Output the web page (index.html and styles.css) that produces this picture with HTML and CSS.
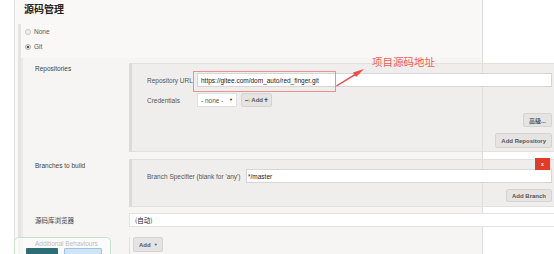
FILE: index.html
```html
<!DOCTYPE html>
<html lang="zh">
<head>
<meta charset="utf-8">
<title>源码管理</title>
<link rel="stylesheet" href="styles.css">
</head>
<body>
<div class="panel">
  <h2 class="title">源码管理</h2>
  <div class="scm">
    <div class="radio"><span class="dot"></span>None</div>
    <div class="radio"><span class="dot on"></span>Git</div>
    <div class="git">
      <div class="row">
        <div class="lbl">Repositories</div>
        <div class="box repo-box">
          <div class="fields repo-fields">
            <div class="flbl">Repository URL</div>
            <div class="input">https://gitee.com/dom_auto/red_finger.git</div>
            <div class="flbl">Credentials</div>
            <div class="cred">
              <div class="select">- none -<span class="caret">&#9660;</span></div>
              <button class="btn addkey"><svg width="9" height="5" viewBox="0 0 9 5"><rect x="0" y="1.6" width="5.5" height="1.8" fill="#3a78c2"/><circle cx="6.8" cy="2.5" r="2" fill="#f2c230"/></svg>Add<span class="plus">&#10010;</span></button>
            </div>
          </div>
          <div class="actions">
            <button class="btn">高级...</button>
            <button class="btn tall">Add Repository</button>
          </div>
        </div>
      </div>
      <div class="row branches">
        <div class="lbl">Branches to build</div>
        <div class="box branch-box">
          <button class="del">x</button>
          <div class="fields branch-fields">
            <div class="flbl">Branch Specifier (blank for 'any')</div>
            <div class="input spec">*/master</div>
          </div>
          <div class="actions">
            <button class="btn">Add Branch</button>
          </div>
        </div>
      </div>
      <div class="row browser">
        <div class="lbl cn">源码库浏览器</div>
        <div class="input wide">(自动)</div>
      </div>
      <div class="row behaviours">
        <div class="lbl">Additional Behaviours</div>
        <div class="addcell"><button class="btn addbtn">Add <span class="dd">&#9660;</span></button></div>
      </div>
    </div>
  </div>
</div>

<div class="mark"></div>
<svg class="arrow" width="40" height="24" viewBox="0 0 40 24">
  <polygon points="1,20.5 19,9.2 18,7.6 29,4 21,12 20,10.6 1.8,21.6" fill="#f04a4a"/>
</svg>
<div class="note">项目源码地址</div>

<div class="popup">
  <span class="pb teal"></span>
  <span class="pb light"></span>
</div>
</body>
</html>
```
FILE: styles.css
```css
html, body {
  margin: 0;
  padding: 0;
  width: 554px;
  height: 254px;
  overflow: hidden;
  background: #fff;
}
body {
  position: relative;
  font-family: "Liberation Sans", Arial, "Noto Sans CJK SC", sans-serif;
  font-size: 6.5px;
  color: #444;
}
.panel {
  position: relative;
  margin-left: 14px;
  width: 467px;
  height: 254px;
  overflow: visible;
  background: #f9f8f7;
  border-left: 1px solid #e4e3e1;
}
.panel::after {
  content: "";
  position: absolute;
  left: 467px;
  top: 0;
  bottom: 0;
  width: 1px;
  background: #dedddb;
  z-index: 1;
}
.title {
  margin: 0 0 9px;
  padding: 3px 0 0 9px;
  font: bold 10px/12px "Noto Sans CJK SC", sans-serif;
  color: #222;
}
.scm {
  margin-left: 3px;
  border-left: 3px solid #e5e4e2;
}
.radio {
  display: flex;
  align-items: center;
  gap: 3px;
  height: 15px;
  padding-left: 4px;
  color: #555;
}
.dot {
  width: 6px;
  height: 6px;
  box-sizing: border-box;
  border-radius: 50%;
  border: 1px solid #c4c4c4;
  background: #efefef;
}
.dot.on {
  background: radial-gradient(circle, #555 0 1.3px, #eee 1.6px);
  border-color: #aaa;
}
.git {
  margin-top: 4px;
  padding-top: 5px;
  border-left: 2px solid #ebeae8;
  background: #f6f5f3;
}
.row {
  display: grid;
  grid-template-columns: 106px 427px;
}
.lbl {
  padding: 2px 0 0 12px;
  line-height: 8px;
  color: #444;
}
.lbl.cn {
  font-family: "Noto Sans CJK SC", sans-serif;
  font-size: 6.5px;
}
.box {
  position: relative;
  box-sizing: border-box;
  background: #efeeec;
  border-top: 1px solid #e2e1df;
  border-bottom: 1px solid #e2e1df;
  border-left: 3px solid #dbdad8;
  padding: 9px 4px 3px 15px;
}
.fields {
  display: grid;
  row-gap: 6px;
  align-items: center;
}
.repo-fields { grid-template-columns: 50px 1fr; }
.branch-fields { grid-template-columns: 99px 1fr; }
.flbl {
  color: #555;
  white-space: nowrap;
}
.input {
  position: relative;
  z-index: 2;
  box-sizing: border-box;
  height: 14px;
  display: flex;
  align-items: center;
  padding-left: 3px;
  background: #fff;
  border: 1px solid #d6d6d6;
  color: #222;
}
.input.spec { padding-left: 1px; }
.cred {
  display: flex;
  gap: 4px;
  height: 14px;
}
.select {
  box-sizing: border-box;
  width: 40px;
  height: 14px;
  display: flex;
  align-items: center;
  padding-left: 3px;
  background: #fff;
  border: 1px solid #e0e0e0;
  color: #555;
  position: relative;
}
.caret {
  position: absolute;
  right: 3px;
  top: 3px;
  font-size: 4px;
  color: #222;
}
.btn {
  position: relative;
  z-index: 2;
  box-sizing: border-box;
  height: 14px;
  padding: 0 5px;
  font: bold 6px "Liberation Sans", Arial, "Noto Sans CJK SC", sans-serif;
  color: #555;
  background: #e5e4e2;
  border: 1px solid #d5d4d2;
  border-radius: 2px;
  display: inline-flex;
  align-items: center;
  gap: 1px;
}
.btn.tall { height: 15px; }
.addkey {
  width: 31px;
  padding: 0 3px;
  gap: 1px;
}
.plus {
  font-size: 4px;
  color: #444;
}
.actions {
  display: flex;
  flex-direction: column;
  align-items: flex-end;
  gap: 6px;
  margin-top: 6px;
}
.branches { margin-top: 7px; }
.branches .lbl { padding-top: 3px; }
.branch-box { padding-bottom: 4px; }
.branch-box .btn { height: 13px; }
.del {
  position: absolute;
  z-index: 3;
  top: -2px;
  right: 6px;
  width: 15px;
  height: 12px;
  padding: 0;
  border: 0;
  background: #e33b25;
  color: #fff;
  font: bold 5px/11px "Liberation Sans", Arial, sans-serif;
}
.browser {
  margin-top: 6px;
  align-items: center;
}
.browser .lbl { padding-top: 0; }
.input.wide {
  padding-left: 5px;
  border-color: #e2e2e2;
  font-family: "Noto Sans CJK SC", sans-serif;
}
.behaviours {
  margin-top: 10px;
  height: 17px;
}
.behaviours .lbl { padding-top: 3px; }
.addcell {
  border-left: 1px solid #e2e1df;
  padding-left: 3px;
}
.addbtn {
  height: 15px;
  width: 30px;
  gap: 3px;
}
.dd { font-size: 4px; }

/* annotation overlay */
.mark {
  position: absolute;
  left: 193px;
  top: 71px;
  width: 141px;
  height: 19px;
  border: 1px solid #ee9090;
  z-index: 5;
}
.arrow {
  position: absolute;
  left: 335px;
  top: 65px;
  z-index: 5;
}
.note {
  position: absolute;
  left: 372px;
  top: 55px;
  font: 10.5px/14px "Noto Sans CJK SC", sans-serif;
  color: #f25a5a;
  z-index: 5;
}
.popup {
  position: absolute;
  left: 14px;
  top: 237px;
  width: 95px;
  height: 17px;
  overflow: hidden;
  border: 1px solid #c9e3cb;
  border-bottom: 0;
  border-radius: 5px 5px 0 0;
  background: rgba(255, 255, 255, 0.62);
  z-index: 6;
}
.pb {
  position: absolute;
  top: 10px;
  height: 10px;
  box-sizing: border-box;
  border-radius: 1px;
}
.pb.teal {
  left: 11px;
  width: 32px;
  background: #2c6e74;
}
.pb.light {
  left: 49px;
  width: 38px;
  background: #cfe3f2;
  border: 1px solid #9cc3df;
}
```
